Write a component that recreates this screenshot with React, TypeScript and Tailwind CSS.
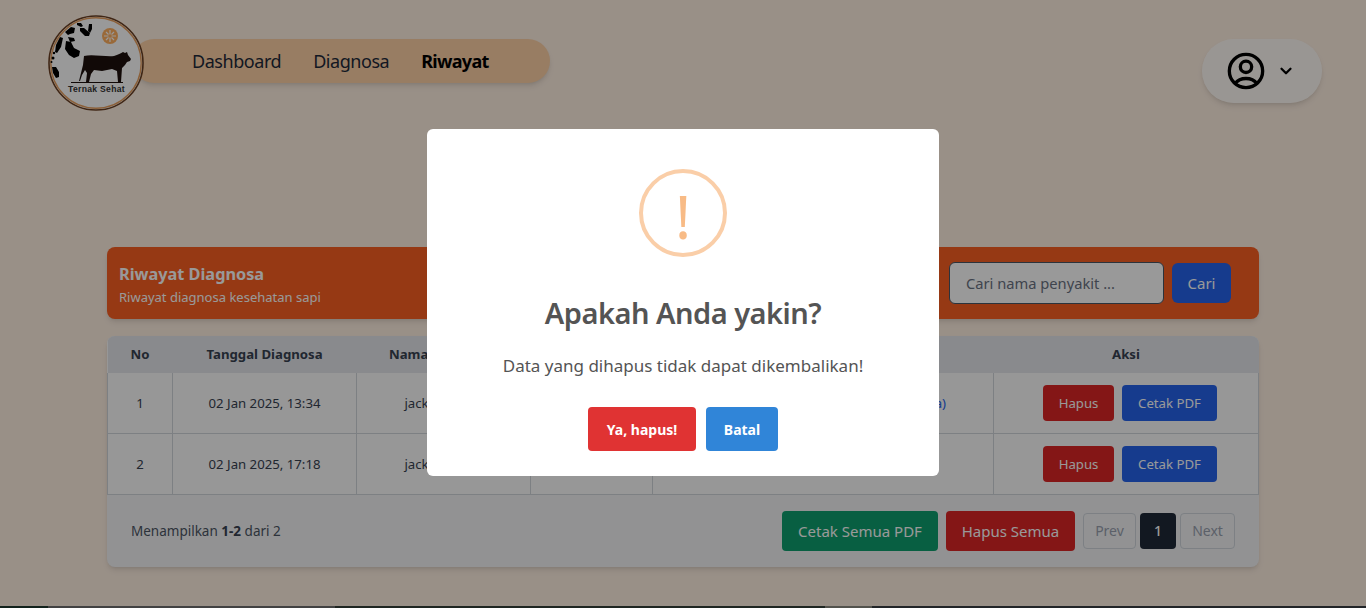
import { ChevronDown } from "lucide-react";

const rows = [
  { no: 1, date: "02 Jan 2025, 13:34", name: "jack sparrow", age: "3 tahun", result: "Penyakit Kuku Sapi (Aftae Epizootica)" },
  { no: 2, date: "02 Jan 2025, 17:18", name: "jack sparrow", age: "3 tahun", result: "Cacingan" },
];

const Logo = () => (
  <svg viewBox="0 0 96 96" className="size-24 shrink-0 relative">
    <circle cx="48" cy="48" r="47" fill="#ffffff" stroke="#6b4023" strokeWidth="1.6" />
    <circle cx="48" cy="48" r="45.2" fill="none" stroke="#e8a060" strokeWidth="1.4" />
    {/* hide spots */}
    <g fill="#000000">
      <path d="M17 17l6-5 4 1-1 5-4 1-2 1z" />
      <path d="M29 8l4 0 2 3-2 1-4-2z" />
      <path d="M32 13l4 0 6 5-1 3-4 0-5-5z" />
      <path d="M41 9l3 0 0 5-2 4-2-2z" />
      <path d="M12 22l3 1-2 9-4 6-2-1 1-7z" />
      <path d="M20 22l6 1 1 3-5 1z" />
      <path d="M18 26l5 1 3 6 6 3-1 5-5 2-5-3-4-6z" />
      <path d="M4 52l4 0 3 5 0 5-3 1-3-5z" />
      <circle cx="6" cy="38" r="1.2" />
      <circle cx="5" cy="43" r="1.5" />
      <circle cx="3.5" cy="47" r="1" />
    </g>
    <circle cx="62" cy="21" r="8" fill="#ffb060" />
    <path d="M62 15v4.5M62 22.5v4.500M56 21h4.500M63.500 21h4.500M58 17l2.500 2.500M66 25l-2.500-2.500M66 17l-2.500 2.500M58 25l2.500-2.500" stroke="#ffffff" strokeWidth="1.2" fill="none" />
    {/* cow */}
    <path
      transform="translate(8 0)"
      d="M28 41C36 39 50 42 58 41C62 40 65 38 67 37L69 38L71 37L72 40L75 44L74 46L71 47L69 50L66 53L65 67L62 67L61 56L56 54L46 56L38 55L35 59L33 67L30 67L31 58L29 55L26 60L24 66L23 66L25 58L27 50Z"
      fill="#1d0f0c"
    />
    <path d="M23 67.500h52" stroke="#1d0f0c" strokeWidth="1" />
    <text x="48.500" y="77" textAnchor="middle" fontFamily="'Liberation Sans', sans-serif" fontSize="8.600" fontWeight="700" letterSpacing="0.3" fill="#333333">
      Ternak Sehat
    </text>
  </svg>
);

const UserIcon = () => (
  <svg viewBox="0 0 24 24" className="size-10" fill="none" stroke="#000000" strokeWidth="2">
    <circle cx="12" cy="12" r="10" />
    <circle cx="12" cy="9.500" r="3.400" />
    <path d="M5.500 19.500a7.500 6 0 0 1 13 0" />
  </svg>
);

const App = () => {
  return (
    <div className="h-[608px] overflow-hidden bg-[#fff0e2] font-['Noto_Sans',sans-serif] flex flex-col">
      <div className="flex-1">
        <header className="flex items-start justify-between pl-12 pr-11 pt-[15px] h-[247px]">
          <div className="flex items-start">
            <Logo />
            <nav className="flex items-center gap-8 h-11 mt-6 -ml-3 pl-[60px] w-[418px] rounded-full bg-[#fdd1a5] shadow-md text-lg tracking-[-0.45px] text-gray-800">
              <span>Dashboard</span>
              <span>Diagnosa</span>
              <span className="font-bold text-black tracking-[-0.7px]">Riwayat</span>
            </nav>
          </div>
          <div className="flex items-center justify-center gap-[11px] pr-[3px] w-[120px] h-16 mt-6 rounded-full bg-white/70 shadow-md">
            <UserIcon />
            <ChevronDown className="size-[18px] text-black" strokeWidth={3} />
          </div>
        </header>

        <main className="w-[1152px] mx-auto">
          <div className="flex items-center justify-between h-[72px] pl-3 pr-7 rounded-lg bg-[#fb5f22] shadow-md text-white">
            <div>
              <h1 className="text-[16.3px] font-bold leading-6">Riwayat Diagnosa</h1>
              <p className="text-[13px] leading-4 mt-[3px]">Riwayat diagnosa kesehatan sapi</p>
            </div>
            <div className="flex items-center gap-2">
              <div className="w-[215px] h-[42px] flex items-center px-4 rounded-md border border-gray-600 bg-white text-gray-500 text-[14.7px]">
                Cari nama penyakit ...
              </div>
              <button className="w-[59px] h-10 rounded-md bg-[#2563eb] text-white text-[15px]">Cari</button>
            </div>
          </div>

          <div className="mt-[17px] rounded-lg bg-gray-100 shadow-md overflow-hidden">
            <table className="w-full table-fixed border-collapse bg-[#fcfcfc] text-[13.2px] text-[#374151]">
              <colgroup>
                <col className="w-[65px]" />
                <col className="w-[184px]" />
                <col className="w-[174px]" />
                <col className="w-[122px]" />
                <col className="w-[341px]" />
                <col />
              </colgroup>
              <thead className="bg-[#e5e7eb]">
                <tr className="h-[37px]">
                  <th className="font-bold">No</th>
                  <th className="font-bold">Tanggal Diagnosa</th>
                  <th className="font-bold">Nama Pengguna</th>
                  <th className="font-bold">Umur</th>
                  <th className="font-bold">Hasil Diagnosa</th>
                  <th className="font-bold">Aksi</th>
                </tr>
              </thead>
              <tbody>
                {rows.map((row) => (
                  <tr key={row.no} className="h-[61px] text-center [&:first-child>td]:border-t-0 [&:first-child]:h-[60px]">
                    <td className="border border-[#d1d5db] pt-0.5">{row.no}</td>
                    <td className="border border-[#d1d5db] pt-0.5">{row.date}</td>
                    <td className="border border-[#d1d5db] pt-0.5">{row.name}</td>
                    <td className="border border-[#d1d5db] pt-0.5">{row.age}</td>
                    <td className={`border border-[#d1d5db] pt-0.5 text-[#2563eb] whitespace-nowrap ${row.no === 1 ? "text-right pr-[47px]" : ""}`}>{row.result}</td>
                    <td className="border border-[#d1d5db]">
                      <div className="flex justify-center gap-2 pl-2">
                        <button className="w-[71px] h-9 pt-0.5 rounded bg-[#dc2626] text-white">Hapus</button>
                        <button className="w-[95px] h-9 pt-0.5 rounded bg-[#2563eb] text-white">Cetak PDF</button>
                      </div>
                    </td>
                  </tr>
                ))}
              </tbody>
            </table>
            <div className="flex items-center justify-between h-[72px] px-6 text-[13.5px] text-[#4b5563]">
              <span className="pt-0.5">
                Menampilkan <b className="text-[#374151]">1-2</b> dari 2
              </span>
              <div className="flex items-center gap-2">
                <button className="w-[156px] h-10 pt-0.5 rounded bg-[#0e9f6e] text-white text-[15px]">Cetak Semua PDF</button>
                <button className="w-[129px] h-10 pt-0.5 rounded bg-[#dc2626] text-white text-[15px]">Hapus Semua</button>
                <div className="flex items-center gap-1 text-sm">
                  <button className="w-[53px] h-9 rounded border border-gray-300 text-gray-400">Prev</button>
                  <button className="w-9 h-9 rounded bg-[#1f2937] text-white font-medium">1</button>
                  <button className="w-[55px] h-9 rounded border border-gray-300 text-gray-400">Next</button>
                </div>
              </div>
            </div>
          </div>
        </main>
      </div>

      <div className="flex h-0.5 shrink-0">
        <div className="w-12 bg-[#1f3a30]" />
        <div className="w-[287px] bg-[#6e6e6e]" />
        <div className="w-[490px] bg-[#35403a]" />
        <div className="w-[47px] bg-[#8a8a80]" />
        <div className="flex-1 bg-[#3a3f44]" />
      </div>

      <div className="fixed inset-0 bg-black/40 flex items-start justify-center pt-[129px]">
        <div className="w-[512px] h-[347px] rounded-md bg-white flex flex-col items-center pt-10 text-[#545454]">
          <div className="size-[88px] pt-[5px] rounded-full border-4 border-[#facea8] flex items-center justify-center text-[#f8bb86] text-[60px] leading-none font-normal">
            !
          </div>
          <h2 className="mt-[38px] text-[29px] tracking-[-0.5px] leading-[36px] font-semibold">Apakah Anda yakin?</h2>
          <p className="mt-[23px] text-[17px] leading-6">Data yang dihapus tidak dapat dikembalikan!</p>
          <div className="mt-[29px] flex gap-[10px]">
            <button className="w-[108px] h-11 pt-0.5 rounded bg-[#e03333] text-white text-sm font-bold">Ya, hapus!</button>
            <button className="w-[72px] h-11 pt-0.5 rounded bg-[#3085d8] text-white text-sm font-bold">Batal</button>
          </div>
        </div>
      </div>
    </div>
  );
};

export default App;
